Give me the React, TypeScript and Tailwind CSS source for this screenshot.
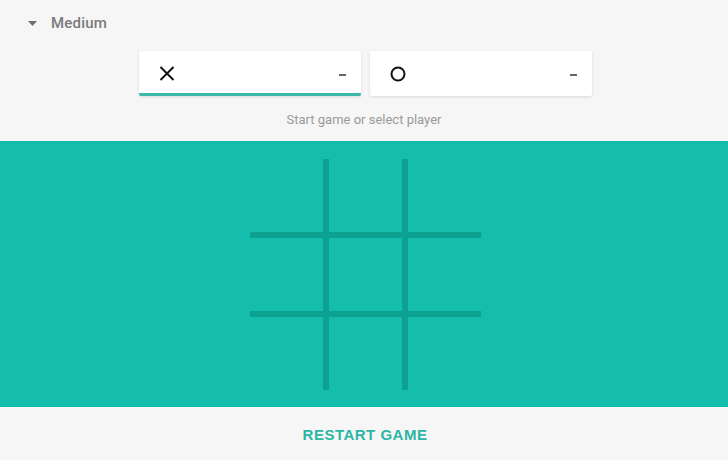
import React from 'react';

const cells = [0, 1, 2, 3, 4, 5, 6, 7, 8];

function PlayerCard({ mark, active }: { mark: 'x' | 'o'; active?: boolean }) {
  return (
    <div
      className={`w-[222px] h-[45px] bg-white rounded-[2px] shadow-[0_1px_3px_rgba(0,0,0,0.12)] flex items-center justify-between pl-[20px] pr-[15px] ${
        active ? 'border-b-[3px] border-[#3cb8a8] pt-[3px]' : ''
      }`}
    >
      {mark === 'x' ? (
        <svg width="16" height="15" viewBox="0 0 16 15">
          <path d="M1.5 1 L14.5 14 M14.5 1 L1.5 14" stroke="#111" strokeWidth="2" />
        </svg>
      ) : (
        <svg width="16" height="16" viewBox="0 0 16 16">
          <circle cx="8" cy="8" r="6.5" fill="none" stroke="#111" strokeWidth="2" />
        </svg>
      )}
      <span className="w-[7px] h-[2px] bg-[#666] mt-[3px]" />
    </div>
  );
}

export default function App() {
  return (
    <div className="w-[728px] h-[460px] bg-[#f6f6f6] flex flex-col font-['Roboto',sans-serif] overflow-hidden">
      {/* Difficulty */}
      <div className="h-[46px] flex items-center pl-[28px] pt-[1px]">
        <svg width="9" height="5" viewBox="0 0 9 5">
          <path d="M0 0 L9 0 L4.5 5 Z" fill="#707070" />
        </svg>
        <span className="ml-[14px] text-[15px] font-medium text-[#7a7a7a] tracking-[0.2px]">Medium</span>
      </div>

      {/* Players */}
      <div className="flex justify-center gap-[9px] mt-[5px] pl-[2px]">
        <PlayerCard mark="x" active />
        <PlayerCard mark="o" />
      </div>

      <p className="text-center text-[13px] text-[#9a9a9a] mt-[15px] leading-[18px]">Start game or select player</p>

      {/* Board */}
      <div className="mt-[12px] h-[266px] bg-[#14bdac] flex justify-center pt-[18px] pl-[2px]">
        <div className="w-[231px] h-[231px] grid grid-cols-3 gap-[6px] bg-[#0da192]">
          {cells.map((c) => (
            <div key={c} className="bg-[#14bdac]" />
          ))}
        </div>
      </div>

      <div className="flex-1 flex items-center justify-center pt-[3px] pl-[2px]">
        <button className="text-[15px] font-bold text-[#2db5a5] tracking-[0.5px] font-['Liberation_Sans',Arial,sans-serif]">
          RESTART GAME
        </button>
      </div>
    </div>
  );
}
